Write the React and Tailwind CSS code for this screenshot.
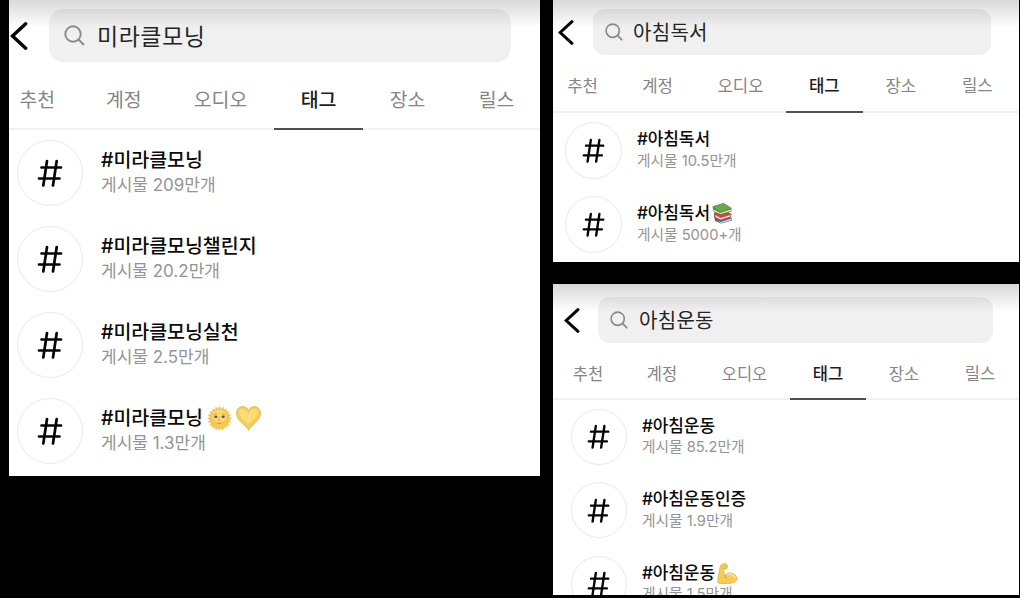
const tabs = ['추천', '계정', '오디오', '태그', '장소', '릴스']

// The three captures share one layout at slightly different scales
const large = {
  header: 'h-[62px] pt-[9px] pl-[1px]',
  back: 'w-[18px] h-[28px] mr-[21px]',
  search: 'w-[462px] h-[53px] rounded-[14px] pl-[15px] gap-[12px]',
  lens: 'w-[21px] h-[21px]',
  query: 'pt-[3px] text-[23px] leading-[34px] tracking-[0.5px]',
  tabs: 'h-[68px] pt-[21px] text-[19.4px] leading-[34px] -ml-[15px]',
  narrowTab: 'w-[86.5px]',
  tab: 'w-[89px]',
  wideTab: 'w-[107px]',
  row: 'h-[86px] pl-[8px] gap-[18px]',
  circle: 'w-[66px] h-[66px]',
  hash: 'w-[26px] h-[28px] mr-[1px]',
  title: 'h-[25px] pt-[1px] text-[19.5px] tracking-[-0.05px]',
  count: 'h-[25px] text-[17px] tracking-[0px]',
  emoji: 'w-[25px] h-[25px] ml-[4px] -mt-[2px]',
}

const medium = {
  header: 'h-[55px] pt-[9px] pl-[5px]',
  back: 'w-[16px] h-[25px] mr-[19px]',
  search: 'w-[398px] h-[46px] rounded-[12px] pl-[12px] gap-[10px]',
  lens: 'w-[18px] h-[18px]',
  query: 'pt-[2px] text-[20px] leading-[30px] tracking-[0.3px]',
  tabs: 'h-[58px] pt-[17px] text-[16.7px] leading-[29px] -ml-[8px]',
  narrowTab: 'w-[75px]',
  tab: 'w-[76.5px]',
  wideTab: 'w-[91px]',
  row: 'h-[74.3px] pl-[12px] gap-[15px]',
  circle: 'w-[57px] h-[57px]',
  hash: 'w-[23px] h-[25px] mr-[1px]',
  title: 'h-[21.5px] text-[17px] tracking-[-0.1px]',
  count: 'h-[21.5px] text-[14.7px] tracking-[0px]',
  emoji: 'w-[21px] h-[21px] ml-[2px]',
}

const small = {
  ...medium,
  header: 'h-[59px] pt-[13px] pl-[11px]',
  search: 'w-[395px] h-[46px] rounded-[12px] pl-[12px] gap-[11px]',
  back: 'w-[16px] h-[25px] mr-[18px]',
  tabs: 'h-[57px] pt-[17px] text-[16.5px] leading-[29px] -ml-[2px]',
  narrowTab: 'w-[74px]',
  tab: 'w-[76px]',
  row: 'h-[73.5px] pl-[18px] gap-[15px]',
  circle: 'w-[56px] h-[56px]',
  title: 'h-[21.5px] pt-[1px] text-[17px] tracking-[-0.1px]',
}

function tabWidth(index, size) {
  if (index < 2) return size.narrowTab
  return index === 2 ? size.wideTab : size.tab
}

function SunFace({ className }) {
  return (
    <svg viewBox="0 0 48 48" className={className}>
      <g fill="#eebf4a">
        {Array.from({ length: 20 }, (_, i) => (
          <path key={i} d="M20 8L24 0L28 8Z" transform={`rotate(${i * 18} 24 24)`} />
        ))}
      </g>
      <circle cx="24" cy="24" r="19" fill="#f4c856" />
      <ellipse cx="24" cy="19" rx="14" ry="11.5" fill="#fad87a" />
      <path d="M12 17q4-4 8-1M28 16q4-3 8 1" stroke="#c9983c" strokeWidth="1.6" fill="none" />
      <ellipse cx="17" cy="20.5" rx="3" ry="2.3" fill="#5c5040" />
      <ellipse cx="31" cy="20.5" rx="3" ry="2.3" fill="#5c5040" />
      <path d="M24 20l-2 8h4" stroke="#dfab48" strokeWidth="1.5" fill="none" />
      <path d="M19 33q5-2 10 0q-5 3.5-10 0" fill="#dc9850" />
    </svg>
  )
}

function YellowHeart({ className }) {
  return (
    <svg viewBox="0 0 48 48" className={className}>
      <path
        d="M24 47C20 37 1 29 1 14C1 6 6 1 13 1C19 1 23 5 24 10C25 5 29 1 35 1C42 1 47 6 47 14C47 29 28 37 24 47Z"
        fill="#f5ce59"
        stroke="#dfb34c"
        strokeWidth="1.5"
      />
      <path d="M6 13C6 7 11 4 16 6C20 8 22 12 24 17C26 10 31 4 37 6C42 8 42 14 40 18C35 27 28 28 24 36C17 28 7 24 6 13Z" fill="#fbdc78" />
    </svg>
  )
}

function Books({ className }) {
  return (
    <svg viewBox="0 0 42 42" className={className}>
      <path d="M5 29L30 23L40 31V35L18 41L6 36Z" fill="#4d6288" />
      <path d="M9 34L17 38L39 31V34L18 40Z" fill="#e0e1e5" />
      <path d="M4 19L28 15L39 22L38 29L16 35L4 29Z" fill="#c54d40" />
      <path d="M7 24L17 30L37 24V27L17 33L7 28Z" fill="#ece3df" />
      <path d="M1 7L23 0L39 10L39 17L17 23L3 17Z" fill="#528f40" />
      <path d="M3 13L16 20L38 13V16L17 22L4 17Z" fill="#e4e8d9" />
      <path d="M1 7L23 0L39 10L16 18Z" fill="#6aa64d" />
    </svg>
  )
}

function Biceps({ className }) {
  return (
    <svg viewBox="0 0 42 42" className={className}>
      <path
        d="M10 2L17 1Q22 3 21 9Q20 13 15 12L13 15L16 25Q22 18 29 20Q38 22 41 32Q38 39 26 41Q12 43 2 40Q0 33 3 24L6 8Q7 4 10 2Z"
        fill="#f7cb58"
        stroke="#dfaa40"
        strokeWidth="1.2"
      />
      <path d="M15 12L11 9M16 25Q15 30 20 31M16 5L19 8" stroke="#cf9536" strokeWidth="1.7" fill="none" />
      <path d="M21 24Q30 19 37 30" stroke="#fee28b" strokeWidth="3" fill="none" />
    </svg>
  )
}

function Panel({ className, size, query, results }) {
  return (
    <section className={`relative overflow-hidden bg-white ${className}`}>
      <div className={`flex items-center ${size.header}`}>
        <svg viewBox="0 0 18 28" className={`shrink-0 ${size.back}`} fill="none" stroke="#050505" strokeWidth="3.4">
          <path d="M15.7 1.8L2.5 14L15.7 26.2" strokeLinecap="round" />
        </svg>
        <div className={`flex shrink-0 items-center bg-[#f0f0f0] ${size.search}`}>
          <svg viewBox="0 0 21 21" className={`shrink-0 ${size.lens}`} fill="none" stroke="#8a8a8a" strokeWidth="1.9">
            <circle cx="9" cy="9" r="7.7" />
            <path d="M14.5 14.5L20 20" />
          </svg>
          <span className={`text-[#252525] ${size.query}`}>{query}</span>
        </div>
      </div>

      {/* Tabs */}
      <div className="border-b-2 border-[#f0f0f0]">
        <div className={`-mb-[2px] flex text-center text-[#858585] ${size.tabs}`}>
          {tabs.map((tab, i) => (
            <div
              key={tab}
              className={`relative shrink-0 ${tabWidth(i, size)} ${
                tab === '태그' ? 'border-b-2 border-[#505050] font-medium text-[#1c1c1c]' : ''
              }`}
            >
              {tab}
            </div>
          ))}
        </div>
      </div>

      {/* Results */}
      {results.map(({ tag, count, emojis = [] }) => (
        <div key={tag + count} className={`flex items-center ${size.row}`}>
          <div className={`flex shrink-0 items-center justify-center rounded-full border border-[#e9e9e9] ${size.circle}`}>
            <svg viewBox="0 0 26 28" className={size.hash} fill="none" stroke="#050505" strokeWidth="2.7" strokeLinecap="round">
              <path d="M10 2L6.3 26.5M19.7 2L16 26.5M4.5 8.5H24M2 19.5H22.5" />
            </svg>
          </div>
          <div className="whitespace-nowrap">
            <div className={`flex items-center font-medium text-[#0b0b0b] ${size.title}`}>
              {tag}
              {emojis.map((Emoji, i) => (
                <Emoji key={i} className={`shrink-0 ${size.emoji}`} />
              ))}
            </div>
            <div className={`flex items-center text-[#949494] ${size.count}`}>게시물 {count}</div>
          </div>
        </div>
      ))}

      {/* Shade under the status bar */}
      <div className="pointer-events-none absolute inset-x-0 top-0 h-[28px] bg-linear-to-b from-black/15 to-transparent" />
    </section>
  )
}

export default function App() {
  return (
    <main className="flex h-[598px] w-[1020px] items-start gap-[13px] overflow-hidden bg-black pl-[9px] font-['Inter','Noto_Sans_CJK_KR',sans-serif]">
      <Panel
        className="h-[476px] w-[531px]"
        size={large}
        query="미라클모닝"
        results={[
          { tag: '#미라클모닝', count: '209만개' },
          { tag: '#미라클모닝챌린지', count: '20.2만개' },
          { tag: '#미라클모닝실천', count: '2.5만개' },
          { tag: '#미라클모닝', count: '1.3만개', emojis: [SunFace, YellowHeart] },
        ]}
      />
      <div className="flex w-[466px] flex-col gap-[22px]">
        <Panel
          className="h-[262px]"
          size={medium}
          query="아침독서"
          results={[
            { tag: '#아침독서', count: '10.5만개' },
            { tag: '#아침독서', count: '5000+개', emojis: [Books] },
          ]}
        />
        <Panel
          className="h-[311px]"
          size={small}
          query="아침운동"
          results={[
            { tag: '#아침운동', count: '85.2만개' },
            { tag: '#아침운동인증', count: '1.9만개' },
            { tag: '#아침운동', count: '1.5만개', emojis: [Biceps] },
          ]}
        />
      </div>
    </main>
  )
}
